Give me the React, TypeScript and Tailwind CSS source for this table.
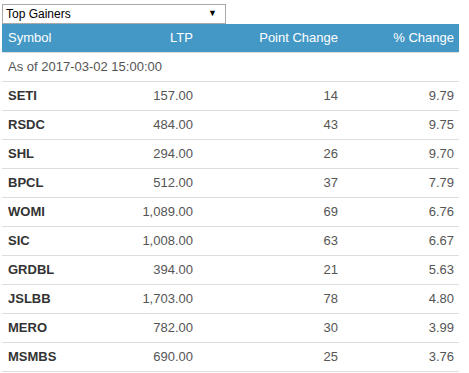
import React from "react";

const rows = [
  ["SETI", "157.00", "14", "9.79"],
  ["RSDC", "484.00", "43", "9.75"],
  ["SHL", "294.00", "26", "9.70"],
  ["BPCL", "512.00", "37", "7.79"],
  ["WOMI", "1,089.00", "69", "6.76"],
  ["SIC", "1,008.00", "63", "6.67"],
  ["GRDBL", "394.00", "21", "5.63"],
  ["JSLBB", "1,703.00", "78", "4.80"],
  ["MERO", "782.00", "30", "3.99"],
  ["MSMBS", "690.00", "25", "3.76"],
];

export default function App() {
  return (
    <div className="w-[469px] h-[373px] bg-white overflow-hidden" style={{ fontFamily: '"Liberation Sans", Arial, sans-serif' }}>
      <div className="pl-[2px] pt-[4px]">
        <div className="w-[224px] h-[20px] border border-[#a9a9a9] bg-white flex items-center justify-between pl-[3px] pr-[8px] text-[12px] text-black">
          <span>Top Gainers</span>
          <span className="text-[9px]">▼</span>
        </div>
        <div className="w-[457px]">
          <div className="grid grid-cols-[100px_96px_145px_116px] h-[29px] items-center bg-[#4498c6] text-white text-[13px] border-b border-[#ddd]">
            <div className="pl-[6px]">Symbol</div>
            <div className="text-right pr-[5px]">LTP</div>
            <div className="text-right pr-[5px]">Point Change</div>
            <div className="text-right pr-[5px]">% Change</div>
          </div>
          <div className="h-[29px] flex items-center pl-[6px] text-[13px] text-[#555] border-b border-[#ddd]">
            As of 2017-03-02 15:00:00
          </div>
          {rows.map((r) => (
            <div key={r[0]} className="grid grid-cols-[100px_96px_145px_116px] h-[29px] items-center text-[13px] text-[#555] border-b border-[#ddd]">
              <div className="pl-[6px] font-bold text-[#333]">{r[0]}</div>
              <div className="text-right pr-[5px]">{r[1]}</div>
              <div className="text-right pr-[5px]">{r[2]}</div>
              <div className="text-right pr-[5px]">{r[3]}</div>
            </div>
          ))}
        </div>
      </div>
    </div>
  );
}
